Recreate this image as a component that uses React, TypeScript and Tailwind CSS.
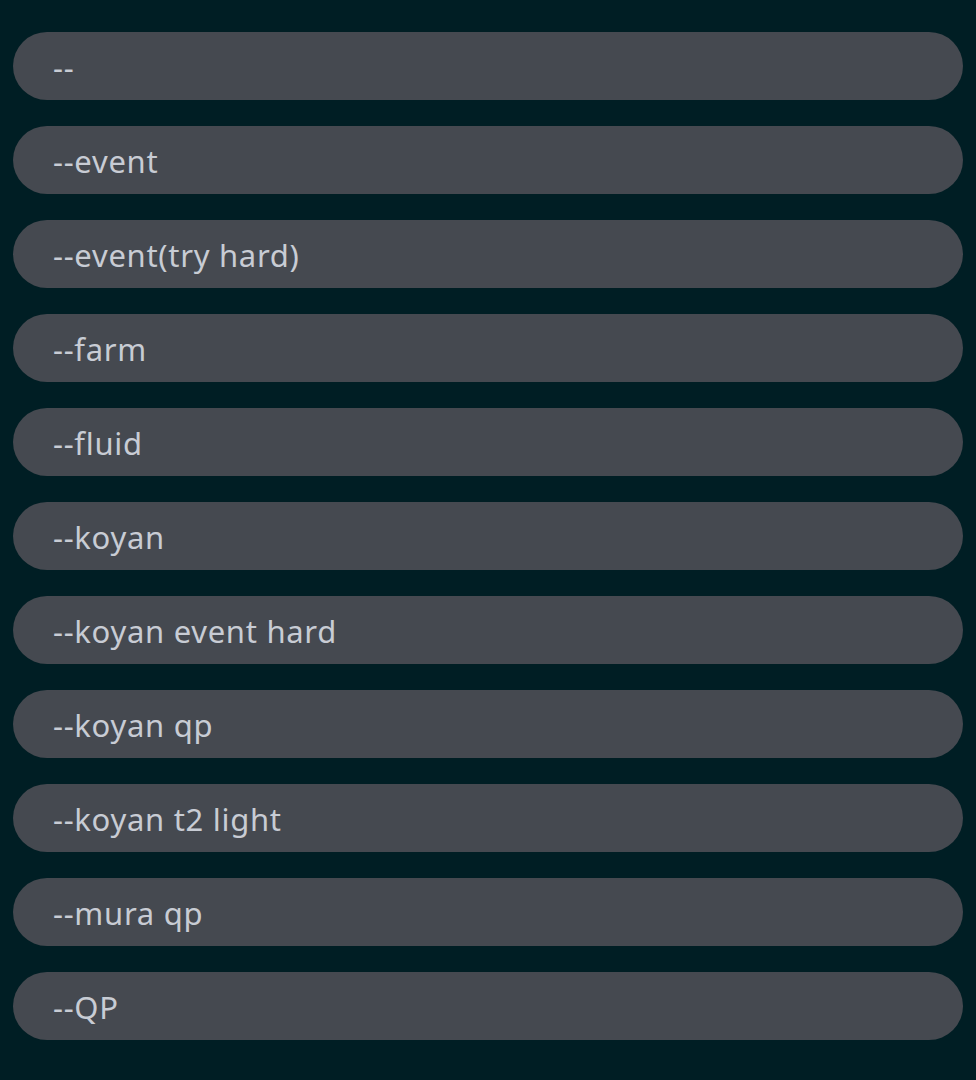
const items = [
  "--",
  "--event",
  "--event(try hard)",
  "--farm",
  "--fluid",
  "--koyan",
  "--koyan event hard",
  "--koyan qp",
  "--koyan t2 light",
  "--mura qp",
  "--QP",
];

export default function App() {
  return (
    <div className="min-h-[1080px] w-full bg-[#001e24] px-[13px] pt-[32px] font-['Noto_Sans',sans-serif]">
      <div className="flex flex-col gap-[26px]">
        {items.map((item) => (
          <div
            key={item}
            className="flex h-[68px] items-center rounded-full bg-[#454950] pl-[40px] pt-[2px] text-[31px] tracking-[0.7px] text-[#c8ccd4]"
          >
            {item}
          </div>
        ))}
      </div>
    </div>
  );
}
